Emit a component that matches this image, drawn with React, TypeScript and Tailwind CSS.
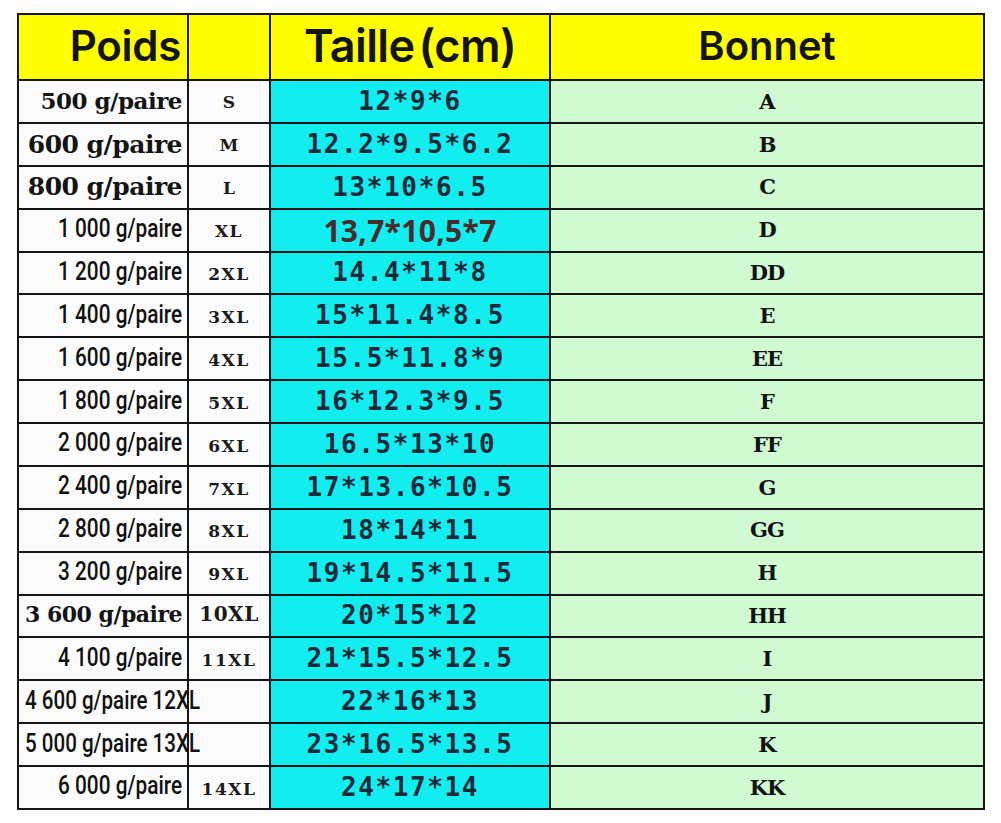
import React from "react";

type Row = {
  w: string;
  wKind: "serif" | "serifL" | "serifLeft" | "cond" | "condLeft";
  s: string;
  sKind?: "small" | "norm" | "big";
  t: string;
  tSpecial?: boolean;
  b: string;
};

const rows: Row[] = [
  { w: "500 g/paire", wKind: "serif", s: "S", sKind: "small", t: "12*9*6", b: "A" },
  { w: "600 g/paire", wKind: "serifL", s: "M", sKind: "small", t: "12.2*9.5*6.2", b: "B" },
  { w: "800 g/paire", wKind: "serifL", s: "L", sKind: "small", t: "13*10*6.5", b: "C" },
  { w: "1 000 g/paire", wKind: "cond", s: "XL", t: "13,7*10,5*7", tSpecial: true, b: "D" },
  { w: "1 200 g/paire", wKind: "cond", s: "2XL", t: "14.4*11*8", b: "DD" },
  { w: "1 400 g/paire", wKind: "cond", s: "3XL", t: "15*11.4*8.5", b: "E" },
  { w: "1 600 g/paire", wKind: "cond", s: "4XL", t: "15.5*11.8*9", b: "EE" },
  { w: "1 800 g/paire", wKind: "cond", s: "5XL", t: "16*12.3*9.5", b: "F" },
  { w: "2 000 g/paire", wKind: "cond", s: "6XL", t: "16.5*13*10", b: "FF" },
  { w: "2 400 g/paire", wKind: "cond", s: "7XL", t: "17*13.6*10.5", b: "G" },
  { w: "2 800 g/paire", wKind: "cond", s: "8XL", t: "18*14*11", b: "GG" },
  { w: "3 200 g/paire", wKind: "cond", s: "9XL", t: "19*14.5*11.5", b: "H" },
  { w: "3 600 g/paire", wKind: "serifLeft", s: "10XL", sKind: "big", t: "20*15*12", b: "HH" },
  { w: "4 100 g/paire", wKind: "cond", s: "11XL", t: "21*15.5*12.5", b: "I" },
  { w: "4 600 g/paire 12XL", wKind: "condLeft", s: "", t: "22*16*13", b: "J" },
  { w: "5 000 g/paire 13XL", wKind: "condLeft", s: "", t: "23*16.5*13.5", b: "K" },
  { w: "6 000 g/paire", wKind: "cond", s: "14XL", t: "24*17*14", b: "KK" },
];

function WeightCell({ r }: { r: Row }) {
  if (r.wKind === "serifLeft") {
    return (
      <div className="flex items-center justify-start pl-[6px] pb-[2px] bg-[#fbfbfb] border-r-2 border-b-2 border-[#161616] overflow-visible whitespace-nowrap relative z-10">
        <span className="font-['DejaVu_Serif',serif] font-bold text-[#141414] tracking-[-0.5px] text-[22px]">{r.w}</span>
      </div>
    );
  }
  if (r.wKind === "serif" || r.wKind === "serifL") {
    return (
      <div className="flex items-center justify-end pr-[5px] bg-[#fbfbfb] border-r-2 border-b-2 border-[#161616] overflow-visible whitespace-nowrap relative z-10">
        <span
          className={
            "font-['DejaVu_Serif',serif] font-bold text-[#141414] tracking-[-0.5px] " +
            (r.wKind === "serifL" ? "text-[25px]" : "text-[23px]")
          }
        >
          {r.w}
        </span>
      </div>
    );
  }
  if (r.wKind === "condLeft") {
    return (
      <div className="flex items-center justify-start pl-[6px] pb-[3px] bg-[#fbfbfb] border-r-2 border-b-2 border-[#161616] overflow-visible whitespace-nowrap relative z-10">
        <span className="inline-block origin-left scale-x-[0.79] font-['Roboto',sans-serif] font-medium text-[26px] text-[#111]">
          {r.w}
        </span>
      </div>
    );
  }
  return (
    <div className="flex items-center justify-end pr-[5px] pb-[3px] bg-[#fbfbfb] border-r-2 border-b-2 border-[#161616] overflow-visible whitespace-nowrap">
      <span className="inline-block origin-right scale-x-[0.8] font-['Roboto',sans-serif] font-medium text-[26px] text-[#111]">
        {r.w}
      </span>
    </div>
  );
}

function SizeCell({ r }: { r: Row }) {
  const cls =
    r.sKind === "small"
      ? "text-[17px] pt-[3px]"
      : r.sKind === "big"
      ? "text-[20px] pb-[3px] tracking-[0.5px]"
      : "text-[17px] pt-[4px] tracking-[1.5px]";
  return (
    <div className="flex items-center justify-center bg-[#fbfbfb] border-r-2 border-b-2 border-[#161616] whitespace-nowrap">
      <span className={"font-['DejaVu_Serif',serif] font-bold text-[#1a1a1a] " + cls}>{r.s}</span>
    </div>
  );
}

function TailleCell({ r }: { r: Row }) {
  return (
    <div className="flex items-center justify-center bg-[#12eef0] border-r-2 border-b-2 border-[#161616] whitespace-nowrap">
      {r.tSpecial ? (
        <span className="font-['Open_Sans',sans-serif] font-bold text-[30px] text-[#4a2b2b] tracking-[0.3px]">{r.t}</span>
      ) : (
        <span className="font-['DejaVu_Sans_Mono',monospace] font-bold text-[26px] tracking-[1.6px] text-[#1b2838]">
          {r.t}
        </span>
      )}
    </div>
  );
}

function BonnetCell({ r }: { r: Row }) {
  return (
    <div className="flex items-center justify-center bg-[#d0fbd2] border-r-2 border-b-2 border-[#161616]">
      <span className="font-['DejaVu_Serif',serif] font-bold text-[21px] text-[#121212] tracking-[-1px]">{r.b}</span>
    </div>
  );
}

export default function App() {
  return (
    <div className="w-[1001px] h-[823px] bg-[#fdfdfd] pt-[13px] pl-[17px]">
      <div className="grid w-[968px] grid-cols-[170px_82px_280px_434px] grid-rows-[66px_repeat(17,42.88px)] border-t-2 border-l-2 border-[#161616]">
        <div className="flex items-center justify-end pr-[6px] pb-[3px] bg-[#ffff00] border-r-2 border-b-2 border-[#161616]">
          <span className="font-['Inter',sans-serif] font-semibold text-[42px] text-[#141414] tracking-[-0.3px]">Poids</span>
        </div>
        <div className="bg-[#ffff00] border-r-2 border-b-2 border-[#161616]" />
        <div className="flex items-center justify-center pb-[3px] bg-[#ffff00] border-r-2 border-b-2 border-[#161616]">
          <span className="font-['Inter',sans-serif] font-semibold text-[45px] text-[#141414] tracking-[-0.6px] whitespace-nowrap">
            Taille<span className="ml-[4px]">(cm)</span>
          </span>
        </div>
        <div className="flex items-center justify-center pb-[3px] bg-[#ffff00] border-r-2 border-b-2 border-[#161616]">
          <span className="font-['Inter',sans-serif] font-semibold text-[40px] text-[#141414]">Bonnet</span>
        </div>
        {rows.map((r, i) => (
          <React.Fragment key={i}>
            <WeightCell r={r} />
            <SizeCell r={r} />
            <TailleCell r={r} />
            <BonnetCell r={r} />
          </React.Fragment>
        ))}
      </div>
    </div>
  );
}
